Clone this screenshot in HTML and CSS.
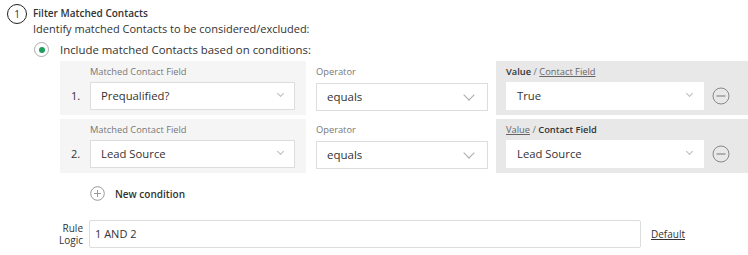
FILE: index.html
```html
<!DOCTYPE html>
<html lang="en">
<head>
  <meta charset="UTF-8">
  <title>Filter Matched Contacts</title>
  <link rel="stylesheet" href="styles.css">
</head>
<body>
  <div class="step">
    <div class="step-head">
      <span class="step-num">1</span>
      <div class="step-text">
        <div class="step-title">Filter Matched Contacts</div>
        <div class="step-desc">Identify matched Contacts to be considered/excluded:</div>
      </div>
    </div>
    <label class="radio-line">
      <span class="radio"><span class="radio-dot"></span></span>
      <span>Include matched Contacts based on conditions:</span>
    </label>

    <div class="conditions">
      <div class="cond-row">
        <div class="cond-field">
          <span class="cond-num">1.</span>
          <div class="col">
            <div class="col-label">Matched Contact Field</div>
            <div class="select field-select">Prequalified?<span class="chev"></span></div>
          </div>
        </div>
        <div class="cond-op">
          <div class="col-label">Operator</div>
          <div class="select op-select">equals<span class="chev chev-lg"></span></div>
        </div>
        <div class="cond-value">
          <div class="col-label"><b>Value</b> / <a class="toggle">Contact Field</a></div>
          <div class="value-line">
            <div class="select value-select">True<span class="chev"></span></div>
            <svg class="remove" width="18" height="18" viewBox="0 0 18 18"><circle cx="9" cy="9" r="8" fill="none" stroke="#888" stroke-width="1"/><line x1="4.5" y1="9" x2="13.5" y2="9" stroke="#888" stroke-width="1.2"/></svg>
          </div>
        </div>
      </div>

      <div class="cond-row">
        <div class="cond-field">
          <span class="cond-num">2.</span>
          <div class="col">
            <div class="col-label">Matched Contact Field</div>
            <div class="select field-select">Lead Source<span class="chev"></span></div>
          </div>
        </div>
        <div class="cond-op">
          <div class="col-label">Operator</div>
          <div class="select op-select">equals<span class="chev chev-lg"></span></div>
        </div>
        <div class="cond-value">
          <div class="col-label"><a class="toggle">Value</a> / <b>Contact Field</b></div>
          <div class="value-line">
            <div class="select value-select">Lead Source<span class="chev"></span></div>
            <svg class="remove" width="18" height="18" viewBox="0 0 18 18"><circle cx="9" cy="9" r="8" fill="none" stroke="#888" stroke-width="1"/><line x1="4.5" y1="9" x2="13.5" y2="9" stroke="#888" stroke-width="1.2"/></svg>
          </div>
        </div>
      </div>
    </div>

    <div class="new-cond">
      <svg width="15" height="15" viewBox="0 0 15 15"><circle cx="7.5" cy="7.5" r="6.8" fill="none" stroke="#999" stroke-width="1"/><line x1="4" y1="7.5" x2="11" y2="7.5" stroke="#999" stroke-width="1"/><line x1="7.5" y1="4" x2="7.5" y2="11" stroke="#999" stroke-width="1"/></svg>
      <span>New condition</span>
    </div>

    <div class="rule-logic">
      <div class="rule-label">Rule<br>Logic</div>
      <div class="rule-input">1 AND 2</div>
      <a class="default-link">Default</a>
    </div>
  </div>
</body>
</html>
```

FILE: styles.css
```css
body {
  margin: 0;
  font-family: "Open Sans", "Liberation Sans", sans-serif;
  color: #333;
  background: #fff;
}
.step {
  padding: 4px 0 0 7px;
}
.step-head {
  display: flex;
  gap: 6px;
}
.step-num {
  width: 18px;
  height: 18px;
  border: 1.3px solid #222;
  border-radius: 50%;
  display: flex;
  align-items: center;
  justify-content: center;
  font-size: 10px;
  flex-shrink: 0;
}
.step-title {
  font-size: 10px;
  font-weight: 600;
  line-height: 15px;
  margin-top: 2px;
}
.step-desc {
  font-size: 11px;
  line-height: 15px;
}
.radio-line {
  display: flex;
  align-items: center;
  gap: 11px;
  margin: 6px 0 0 27px;
  font-size: 11.4px;
}
.radio {
  width: 13px;
  height: 13px;
  border: 1px solid #aaa;
  border-radius: 50%;
  display: flex;
  align-items: center;
  justify-content: center;
}
.radio-dot {
  width: 6px;
  height: 6px;
  border-radius: 50%;
  background: #1e9e5a;
}
.conditions {
  margin: 4px 0 0 53px;
  display: flex;
  flex-direction: column;
  gap: 4px;
}
.cond-row {
  display: flex;
  height: 54px;
}
.col-label {
  font-size: 9.3px;
  color: #777;
  height: 21px;
  line-height: 22px;
}
.col-label b {
  color: #333;
  font-weight: 600;
}
.toggle {
  color: #666;
  text-decoration: underline;
}
.cond-field {
  width: 246px;
  background: #f5f5f5;
  display: flex;
}
.cond-num {
  width: 30px;
  padding: 21px 0 0 11px;
  box-sizing: border-box;
  font-size: 11px;
  line-height: 28px;
}
.select {
  position: relative;
  height: 28px;
  box-sizing: border-box;
  border: 1px solid #ddd;
  background: #fff;
  font-size: 11.3px;
  padding-left: 10px;
  line-height: 26px;
}
.field-select {
  width: 205px;
}
.cond-op {
  width: 190px;
  padding-left: 10px;
  box-sizing: border-box;
}
.op-select {
  width: 172px;
  margin-top: 1px;
  font-size: 11.5px;
}
.cond-value {
  flex: 1;
  background: #e8e8e8;
  padding-left: 10px;
}
.value-line {
  display: flex;
  align-items: center;
  gap: 8px;
}
.value-select {
  width: 198px;
  border-color: #fff;
}
.chev {
  position: absolute;
  right: 11px;
  top: 8px;
  width: 4px;
  height: 4px;
  border-right: 1px solid #bbb;
  border-bottom: 1px solid #bbb;
  transform: rotate(45deg);
}
.chev-lg {
  width: 7px;
  height: 7px;
  top: 7px;
  right: 14px;
  border-color: #aaa;
}
.new-cond {
  display: flex;
  align-items: center;
  gap: 10px;
  margin: 13px 0 0 83px;
  font-size: 10px;
  font-weight: 600;
}
.rule-logic {
  display: flex;
  align-items: center;
  margin-top: 19px;
}
.rule-label {
  width: 76px;
  text-align: right;
  font-size: 10px;
  line-height: 12.5px;
}
.rule-input {
  margin-left: 6px;
  width: 552px;
  height: 28px;
  box-sizing: border-box;
  border: 1px solid #ddd;
  border-radius: 2px;
  padding-left: 5px;
  font-size: 11px;
  line-height: 26px;
}
.default-link {
  margin-left: 10px;
  font-size: 10px;
  color: #333;
  text-decoration: underline;
}
```
